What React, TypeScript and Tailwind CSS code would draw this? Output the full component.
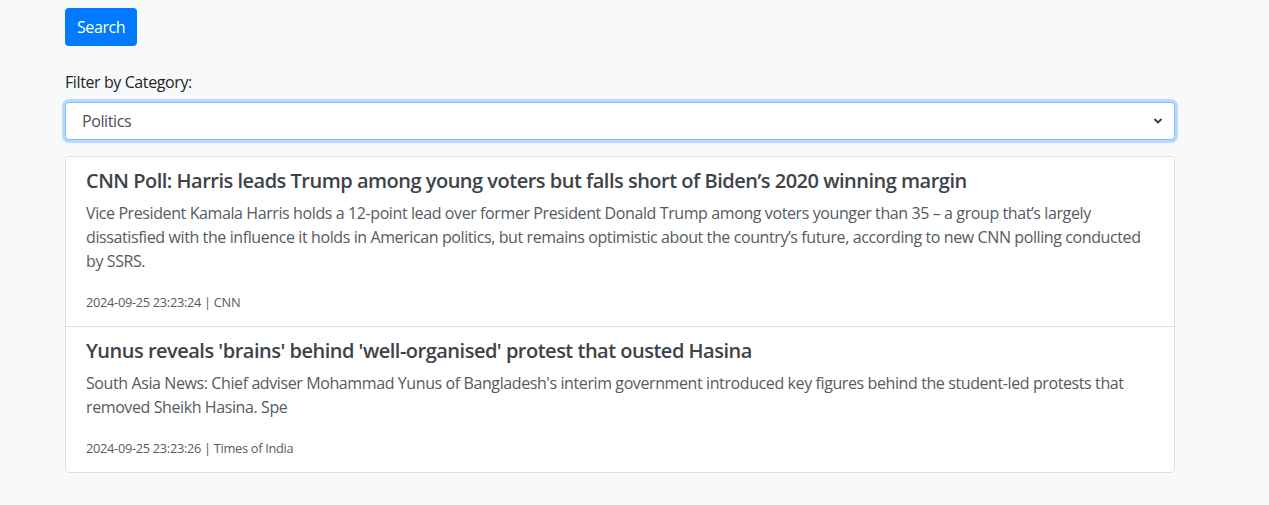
import React from "react";

const articles = [
  {
    title: "CNN Poll: Harris leads Trump among young voters but falls short of Biden’s 2020 winning margin",
    desc: "Vice President Kamala Harris holds a 12-point lead over former President Donald Trump among voters younger than 35 – a group that’s largely dissatisfied with the influence it holds in American politics, but remains optimistic about the country’s future, according to new CNN polling conducted by SSRS.",
    meta: "2024-09-25 23:23:24 | CNN",
  },
  {
    title: "Yunus reveals 'brains' behind 'well-organised' protest that ousted Hasina",
    desc: "South Asia News: Chief adviser Mohammad Yunus of Bangladesh's interim government introduced key figures behind the student-led protests that removed Sheikh Hasina. Spe",
    meta: "2024-09-25 23:23:26 | Times of India",
  },
];

export default function App() {
  return (
    <div
      className="min-h-[505px] bg-[#f8f9fa] text-[#212529]"
      style={{ fontFamily: '"Open Sans", "Noto Sans", sans-serif' }}
    >
      <div className="w-[1110px] ml-[65px] pt-[8px] pb-[34px]">
        <button className="h-[38px] px-[12px] rounded-[4px] bg-[#007bff] text-white text-[16px] leading-[24px] tracking-[-0.4px]">
          Search
        </button>
        <div className="mt-[24px] mb-[8px] text-[16px] leading-[24px] text-[#212529] tracking-[-0.4px]">
          Filter by Category:
        </div>
        <div className="h-[38px] flex items-center justify-between rounded-[4px] border border-[#80bdff] bg-white pl-[16px] pr-[10px] shadow-[0_0_0_3px_rgba(0,123,255,0.25)]">
          <span className="text-[16px] leading-[24px] text-[#495057] tracking-[-0.4px]">Politics</span>
          <svg width="10" height="8" viewBox="0 0 10 8" className="mr-[1px]">
            <path d="M1.5 2 L5 5.5 L8.5 2" fill="none" stroke="#343a40" strokeWidth="1.8" />
          </svg>
        </div>
        <div className="mt-[16px] border border-[#dfdfdf] rounded-[4px] bg-white">
          {articles.map((a, i) => (
            <div
              key={i}
              className={`px-[20px] py-[12px] ${i > 0 ? "border-t border-[#dfdfdf]" : ""}`}
            >
              <h5 className="text-[20px] leading-[24px] font-semibold text-[#3e4348] mb-[8px] tracking-[-0.5px]">
                {a.title}
              </h5>
              <p className="text-[16px] leading-[24px] text-[#555b61] mb-[16px] tracking-[-0.4px]">
                {a.desc}
              </p>
              <div className="text-[16px] leading-[24px]">
                <span className="text-[12.8px] text-[#555b61] tracking-[-0.3px]">{a.meta}</span>
              </div>
            </div>
          ))}
        </div>
      </div>
    </div>
  );
}
